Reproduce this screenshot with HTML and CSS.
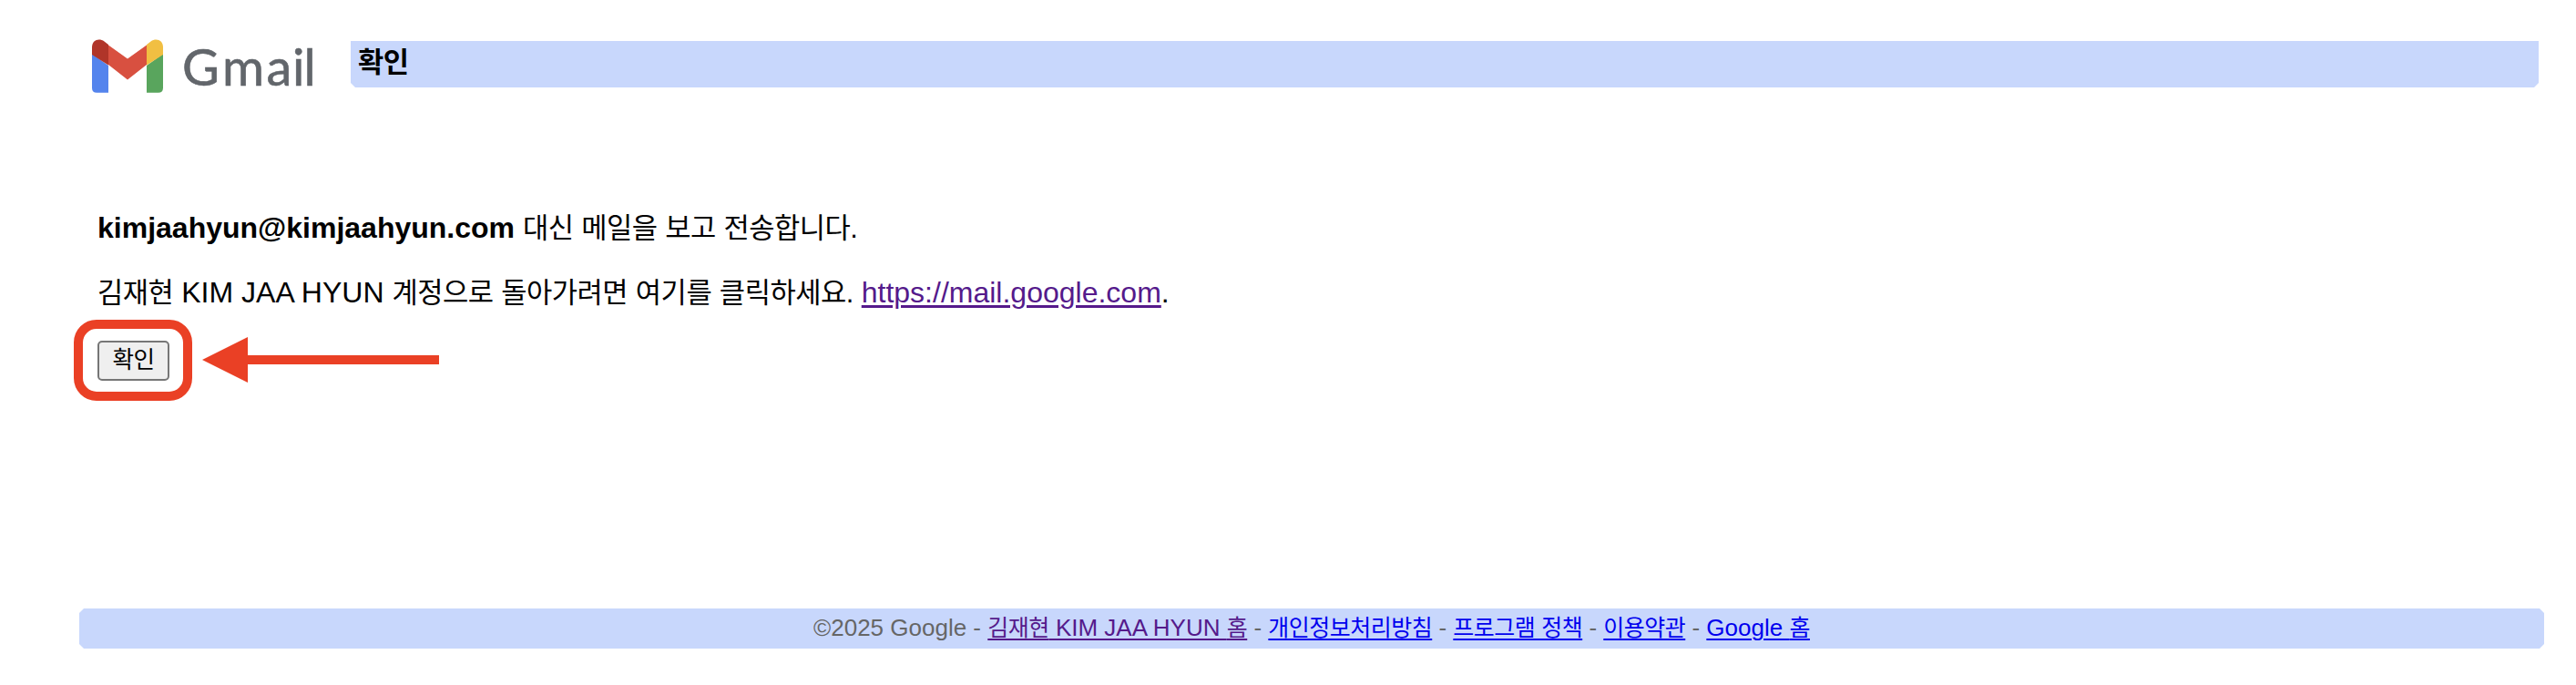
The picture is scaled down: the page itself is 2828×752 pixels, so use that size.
FILE: index.html
```html
<!DOCTYPE html>
<html lang="ko">
<head>
<meta charset="utf-8">
<title>Gmail - 확인</title>
<link rel="stylesheet" href="styles.css">
</head>
<body>
<header class="header">
  <svg class="logo" viewBox="0 0 260 70" role="img" aria-label="Gmail">
    <path fill="#5484ed" d="M0 16V53.500q0 5.300 5.300 5.300H18V29z"/>
    <path fill="#59a55d" d="M60 29V58.800H72.700Q78 58.800 78 53.500V16z"/>
    <path fill="#d85040" d="M18 6.500 39 21.500 60 6.500V28L39 44.500 18 28z"/>
    <path fill="#b03529" d="M0 17V9C0 .5 8-1.500 13.500 2.500L18 6V28.500L0 17z"/>
    <path fill="#f1bf42" d="M60 28.500V6L64.500 2.500C70-1.500 78 .5 78 9V17z"/>
    <text class="logo-text" y="51" x="99 143 191.500 220 232.500">Gmail</text>
  </svg>
  <h1 class="title"><span class="ko">확인</span></h1>
</header>
<main class="content">
  <p class="line"><b>kimjaahyun@kimjaahyun.com</b> <span class="ko">대신 메일을 보고 전송합니다.</span></p>
  <p class="line"><span class="ko">김재현</span> KIM JAA HYUN <span class="ko">계정으로 돌아가려면 여기를 클릭하세요.</span> <a class="visited" href="#">https://mail.google.com</a>.</p>
  <div class="action">
    <div class="highlight"><button class="confirm"><span class="ko">확인</span></button></div>
    <svg class="arrow" viewBox="0 0 260 50"><path fill="#ea4025" d="M0 25 50 0V20H260V30H50V50z"/></svg>
  </div>
</main>
<footer class="footer">©2025 Google - <a class="visited" href="#"><span class="ko">김재현</span> KIM JAA HYUN <span class="ko">홈</span></a> - <a href="#"><span class="ko">개인정보처리방침</span></a> - <a href="#"><span class="ko">프로그램 정책</span></a> - <a href="#"><span class="ko">이용약관</span></a> - <a href="#">Google <span class="ko">홈</span></a></footer>
</body>
</html>
```
FILE: styles.css
```css
* { box-sizing: border-box; }
body {
  margin: 0;
  padding: 43px 35px 0 87px;
  height: 752px;
  background: #fff;
  color: #000;
  font: 32px/36px "Liberation Sans", "Noto Sans CJK KR", sans-serif;
}
.ko { font-size: .96em; letter-spacing: -.019em; word-spacing: .02em; }
.line .ko { letter-spacing: -.0155em; }
.header { display: flex; height: 185px; padding: 0 6px 0 14px; }
.logo { width: 260px; height: 70px; flex: none; overflow: visible; }
.logo-text { font: 56px Lato, sans-serif; fill: #62666b; stroke: #62666b; stroke-width: .6px; }
.title {
  flex: 1;
  height: 51px;
  margin: 2px 0 0 24px;
  padding: 5px 8px;
  font-size: 32px;
  line-height: 36px;
  background: #c8d7fc;
  clip-path: polygon(0 0, 100% 0, 100% calc(100% - 5px), calc(100% - 5px) 100%, 5px 100%, 0 calc(100% - 5px));
}
.content { height: 436px; padding-left: 20px; }
.line { height: 36px; margin: 4px 0 35px; white-space: nowrap; }
.line + .line { margin-bottom: 12px; }
a { color: #0000ee; text-decoration: underline; text-decoration-thickness: 2px; text-underline-offset: 3px; }
.line a { text-decoration-thickness: 3px; }
.visited { color: #551a8b; }
.action { display: flex; align-items: center; gap: 11px; margin-left: -26px; height: 89px; }
.highlight {
  display: flex;
  width: 130px;
  height: 89px;
  padding: 13px 16px;
  border: 10px solid #ea4025;
  border-radius: 25px;
}
.confirm {
  flex: none;
  width: 79px;
  height: 44px;
  padding: 0 0 3px;
  border: 2px solid #767676;
  border-radius: 5px;
  background: #efefef;
  color: #000;
  font: 26.667px/34px "Liberation Sans", "Noto Sans CJK KR", sans-serif;
}
.arrow { width: 260px; height: 50px; margin-bottom: 1px; }
.footer {
  height: 44px;
  background: #c8d7fc;
  color: #666;
  font-size: 26px;
  line-height: 42px;
  text-align: center;
  white-space: nowrap;
  clip-path: polygon(5px 0, calc(100% - 5px) 0, 100% 5px, 100% calc(100% - 5px), calc(100% - 5px) 100%, 5px 100%, 0 calc(100% - 5px), 0 5px);
}
```
